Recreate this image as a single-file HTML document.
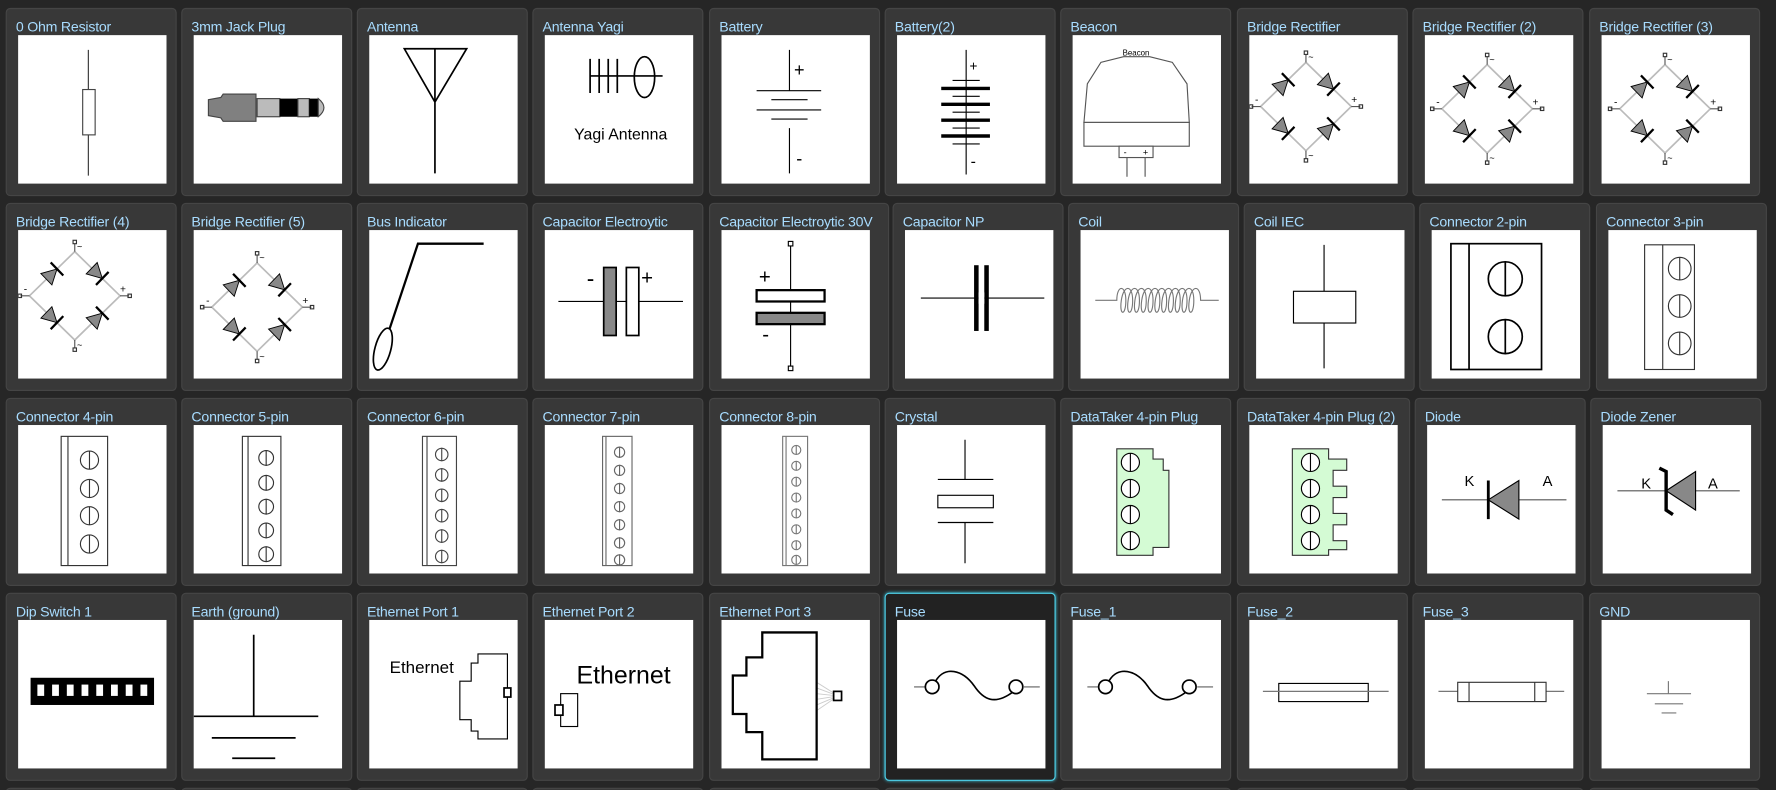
<!DOCTYPE html>
<html><head><meta charset="utf-8"><style>
html,body{margin:0;padding:0;background:#262626;width:1776px;height:790px;overflow:hidden}
#o{position:absolute;left:0;top:0;width:1776px;height:790px;overflow:hidden}
#w{position:absolute;left:0;top:0;width:1568px;height:697px;overflow:hidden;transform:scale(1.13265,1.1334);transform-origin:0 0;font-family:"Liberation Sans",sans-serif}
.c{position:absolute;width:149px;height:164px;background:#383838;border:1px solid #454545;border-radius:4px}
.c span{position:absolute;left:8px;top:9px;font-size:12.5px;color:#a8dcff;white-space:nowrap;letter-spacing:-0.2px}
.c svg{position:absolute;left:10px;top:23px;width:131px;height:131px;background:#fff}
.sel{background:#222;border-color:#4fd2ea;box-shadow:0 0 3px #3bb8d0}
.r5{top:695px;height:10px}
</style></head><body><div id="o"><div id="w">
<svg width="0" height="0" style="position:absolute"><defs>
<g id="dd"><polygon points="-7,-7 -7,7 6,0" fill="#888" stroke="#000" stroke-width="0.8"/><line x1="6" y1="-8" x2="6" y2="8" stroke="#000" stroke-width="2"/></g>
<g id="br"><polygon points="-40,0 0,-39 40,0 0,39" fill="none" stroke="#bbb" stroke-width="1.5"/>
<use href="#dd" transform="translate(-20,-19.5) rotate(-44)"/><use href="#dd" transform="translate(20,-19.5) rotate(44)"/>
<use href="#dd" transform="translate(-20,19.5) rotate(44)"/><use href="#dd" transform="translate(20,19.5) rotate(-44)"/>
<line x1="0" y1="-39" x2="0" y2="-46" stroke="#555"/><line x1="0" y1="39" x2="0" y2="46" stroke="#555"/>
<line x1="-40" y1="0" x2="-48" y2="0" stroke="#555"/><line x1="40" y1="0" x2="48" y2="0" stroke="#555"/>
<rect x="-50" y="-1.5" width="3" height="3" fill="none" stroke="#333"/><rect x="47" y="-1.5" width="3" height="3" fill="none" stroke="#333"/>
<rect x="-1.5" y="-49" width="3" height="3" fill="none" stroke="#333"/><rect x="-1.5" y="46" width="3" height="3" fill="none" stroke="#333"/>
<text x="2" y="-41" font-size="8">~</text><text x="2" y="46" font-size="8">~</text><text x="-45" y="-3" font-size="9">-</text><text x="40" y="-3" font-size="9">+</text></g>
</defs></svg>

<div class="c" style="left:5px;top:7px"><span>0 Ohm Resistor</span><svg viewBox="0 0 131 131"><line x1="62" y1="13" x2="62" y2="124" stroke="#333"/><rect x="57" y="48" width="11" height="40" fill="#fff" stroke="#444"/></svg></div>
<div class="c" style="left:160px;top:7px"><span>3mm Jack Plug</span><svg viewBox="0 0 131 131"><path d="M13 57 L24 55 L26 52 L55 52 L55 76 L26 76 L24 73 L13 71 Z" fill="#808080" stroke="#444"/><rect x="56" y="56" width="20" height="16" fill="#bbb" stroke="#444"/><rect x="76" y="56" width="16" height="16" fill="#000"/><rect x="92" y="56" width="10" height="16" fill="#bbb" stroke="#444"/><rect x="102" y="56" width="8" height="16" fill="#000"/><path d="M110 56 Q120 64 110 72 Z" fill="#bbb" stroke="#444"/></svg></div>
<div class="c" style="left:315px;top:7px"><span>Antenna</span><svg viewBox="0 0 131 131"><path d="M31 12 L86 12 L58 59 Z M58 12 V122" fill="none" stroke="#000" stroke-width="1.5"/></svg></div>
<div class="c" style="left:470px;top:7px"><span>Antenna Yagi</span><svg viewBox="0 0 131 131"><g stroke="#000" stroke-width="1.5"><line x1="40" y1="21" x2="40" y2="51"/><line x1="48" y1="21" x2="48" y2="51"/><line x1="56" y1="21" x2="56" y2="51"/><line x1="64" y1="21" x2="64" y2="51"/><line x1="40" y1="36" x2="104" y2="36"/></g><ellipse cx="88" cy="37" rx="9" ry="18" fill="none" stroke="#000" stroke-width="1.5"/><text x="67" y="92" font-size="14" text-anchor="middle">Yagi Antenna</text></svg></div>
<div class="c" style="left:626px;top:7px"><span>Battery</span><svg viewBox="0 0 131 131"><g stroke="#000"><line x1="60" y1="13" x2="60" y2="49"/><line x1="31" y1="49" x2="88" y2="49"/><line x1="44" y1="57" x2="76" y2="57"/><line x1="31" y1="66" x2="88" y2="66"/><line x1="44" y1="74" x2="76" y2="74"/><line x1="60" y1="82" x2="60" y2="122"/></g><text x="64" y="36" font-size="16">+</text><text x="66" y="114" font-size="16">-</text></svg></div>
<div class="c" style="left:781px;top:7px"><span>Battery(2)</span><svg viewBox="0 0 131 131"><g stroke="#000"><line x1="61" y1="13" x2="61" y2="123"/><g stroke-width="3"><line x1="39" y1="47" x2="82" y2="47"/><line x1="39" y1="61" x2="82" y2="61"/><line x1="39" y1="75" x2="82" y2="75"/><line x1="39" y1="89" x2="82" y2="89"/></g><line x1="49" y1="40" x2="73" y2="40"/><line x1="49" y1="54" x2="73" y2="54"/><line x1="49" y1="68" x2="73" y2="68"/><line x1="49" y1="82" x2="73" y2="82"/><line x1="49" y1="96" x2="73" y2="96"/></g><text x="64" y="31" font-size="12">+</text><text x="65" y="116" font-size="14">-</text></svg></div>
<div class="c" style="left:936px;top:7px"><span>Beacon</span><svg viewBox="0 0 131 131"><path d="M10 77 L13 43 L25 24 L45 19 L68 19 L88 24 L101 43 L103 77 Z" fill="#fff" stroke="#555"/><rect x="10" y="77" width="93" height="21" fill="#fff" stroke="#555"/><rect x="41" y="98" width="30" height="10" fill="#fff" stroke="#555"/><line x1="48" y1="108" x2="48" y2="125" stroke="#555"/><line x1="64" y1="108" x2="64" y2="125" stroke="#555"/><text x="56" y="18" font-size="7" text-anchor="middle">Beacon</text><text x="45" y="106" font-size="8">-</text><text x="62" y="106" font-size="8">+</text></svg></div>
<div class="c" style="left:1092px;top:7px"><span>Bridge Rectifier</span><svg viewBox="0 0 131 131"><use href="#br" x="50" y="63"/></svg></div>
<div class="c" style="left:1247px;top:7px"><span>Bridge Rectifier (2)</span><svg viewBox="0 0 131 131"><use href="#br" x="55" y="65"/></svg></div>
<div class="c" style="left:1403px;top:7px"><span>Bridge Rectifier (3)</span><svg viewBox="0 0 131 131"><use href="#br" x="56" y="65"/></svg></div>

<div class="c" style="left:5px;top:179px"><span>Bridge Rectifier (4)</span><svg viewBox="0 0 131 131"><use href="#br" x="50" y="58"/></svg></div>
<div class="c" style="left:160px;top:179px"><span>Bridge Rectifier (5)</span><svg viewBox="0 0 131 131"><use href="#br" x="56" y="68"/></svg></div>
<div class="c" style="left:315px;top:179px"><span>Bus Indicator</span><svg viewBox="0 0 131 131"><polyline points="18,87 43,12 101,12" fill="none" stroke="#000" stroke-width="2"/><ellipse cx="12" cy="105" rx="7" ry="19" transform="rotate(15 12 105)" fill="none" stroke="#000" stroke-width="1.5"/></svg></div>
<div class="c" style="left:470px;top:179px"><span>Capacitor Electroytic</span><svg viewBox="0 0 131 131"><line x1="12" y1="63" x2="122" y2="63" stroke="#000"/><rect x="52" y="33" width="11" height="60" fill="#888" stroke="#000" stroke-width="1.5"/><rect x="72" y="33" width="11" height="60" fill="#fff" stroke="#000" stroke-width="1.5"/><text x="37" y="50" font-size="20">-</text><text x="85" y="48" font-size="18">+</text></svg></div>
<div class="c" style="left:626px;top:179px;width:157px"><span>Capacitor Electroytic 30V</span><svg viewBox="0 0 131 131"><line x1="61" y1="12" x2="61" y2="122" stroke="#000"/><rect x="59" y="10" width="4" height="4" fill="#fff" stroke="#000"/><rect x="59" y="120" width="4" height="4" fill="#fff" stroke="#000"/><rect x="31" y="53" width="60" height="10" fill="#fff" stroke="#000" stroke-width="2"/><rect x="31" y="73" width="60" height="10" fill="#888" stroke="#000" stroke-width="2"/><text x="33" y="47" font-size="18">+</text><text x="36" y="98" font-size="18">-</text></svg></div>
<div class="c" style="left:788px;top:179px"><span>Capacitor NP</span><svg viewBox="0 0 131 131"><line x1="14" y1="60" x2="123" y2="60" stroke="#000"/><rect x="61" y="31" width="4" height="58" fill="#000"/><rect x="70" y="31" width="4" height="58" fill="#000"/><rect x="65" y="55" width="5" height="10" fill="#fff"/></svg></div>
<div class="c" style="left:943px;top:179px"><span>Coil</span><svg viewBox="0 0 131 131"><path d="M13 62 H32 C32 48 40 48 40 62 C40 76 34 76 36 62 C38 48 46 48 46 62 C46 76 40 76 42 62 C44 48 52 48 52 62 C52 76 46 76 48 62 C50 48 58 48 58 62 C58 76 52 76 54 62 C56 48 64 48 64 62 C64 76 58 76 60 62 C62 48 70 48 70 62 C70 76 64 76 66 62 C68 48 76 48 76 62 C76 76 70 76 72 62 C74 48 82 48 82 62 C82 76 76 76 78 62 C80 48 88 48 88 62 C88 76 82 76 84 62 C86 48 94 48 94 62 C94 76 88 76 90 62 C92 48 100 48 100 62 C100 76 94 76 96 62 C98 48 106 48 106 62 H122" fill="none" stroke="#777"/></svg></div>
<div class="c" style="left:1098px;top:179px"><span>Coil IEC</span><svg viewBox="0 0 131 131"><line x1="60" y1="13" x2="60" y2="122" stroke="#000"/><rect x="33" y="54" width="55" height="28" fill="#fff" stroke="#000"/></svg></div>
<div class="c" style="left:1253px;top:179px"><span>Connector 2-pin</span><svg viewBox="0 0 131 131"><g fill="#fff" stroke="#000" stroke-width="1.5"><rect x="17" y="12" width="80" height="111"/><line x1="33" y1="12" x2="33" y2="123"/><circle cx="65" cy="43" r="15"/><circle cx="65" cy="94" r="15"/><line x1="65" y1="28" x2="65" y2="58"/><line x1="65" y1="79" x2="65" y2="109"/></g></svg></div>
<div class="c" style="left:1409px;top:179px"><span>Connector 3-pin</span><svg viewBox="0 0 131 131"><g fill="#fff" stroke="#333"><rect x="32" y="13" width="44" height="110"/><line x1="48" y1="13" x2="48" y2="123"/><circle cx="63" cy="34" r="10"/><circle cx="63" cy="67" r="10"/><circle cx="63" cy="100" r="10"/><line x1="63" y1="24" x2="63" y2="44"/><line x1="63" y1="57" x2="63" y2="77"/><line x1="63" y1="90" x2="63" y2="110"/></g></svg></div>

<div class="c" style="left:5px;top:351px"><span>Connector 4-pin</span><svg viewBox="0 0 131 131"><g fill="#fff" stroke="#333"><rect x="38" y="10" width="41" height="114"/><line x1="44" y1="10" x2="44" y2="124"/><circle cx="63" cy="31" r="8"/><circle cx="63" cy="56" r="8"/><circle cx="63" cy="80" r="8"/><circle cx="63" cy="105" r="8"/><path d="M63 23V39M63 48V64M63 72V88M63 97V113"/></g></svg></div>
<div class="c" style="left:160px;top:351px"><span>Connector 5-pin</span><svg viewBox="0 0 131 131"><g fill="#fff" stroke="#333"><rect x="43" y="10" width="34" height="114"/><line x1="48" y1="10" x2="48" y2="124"/><circle cx="64" cy="29" r="6.5"/><circle cx="64" cy="51" r="6.5"/><circle cx="64" cy="72" r="6.5"/><circle cx="64" cy="93" r="6.5"/><circle cx="64" cy="114" r="6.5"/><path d="M64 22V36M64 44V58M64 65V79M64 86V100M64 107V121"/></g></svg></div>
<div class="c" style="left:315px;top:351px"><span>Connector 6-pin</span><svg viewBox="0 0 131 131"><g fill="#fff" stroke="#444"><rect x="47" y="10" width="30" height="114"/><line x1="51" y1="10" x2="51" y2="124"/><circle cx="64" cy="26" r="5.5"/><circle cx="64" cy="44" r="5.5"/><circle cx="64" cy="62" r="5.5"/><circle cx="64" cy="80" r="5.5"/><circle cx="64" cy="98" r="5.5"/><circle cx="64" cy="116" r="5.5"/><path d="M64 20V32M64 38V50M64 56V68M64 74V86M64 92V104M64 110V122"/></g></svg></div>
<div class="c" style="left:470px;top:351px"><span>Connector 7-pin</span><svg viewBox="0 0 131 131"><g fill="#fff" stroke="#666"><rect x="51" y="10" width="26" height="114"/><line x1="54" y1="10" x2="54" y2="124"/><circle cx="66" cy="24" r="4.5"/><circle cx="66" cy="40" r="4.5"/><circle cx="66" cy="56" r="4.5"/><circle cx="66" cy="72" r="4.5"/><circle cx="66" cy="88" r="4.5"/><circle cx="66" cy="104" r="4.5"/><circle cx="66" cy="119" r="4.5"/><path d="M66 19V29M66 35V45M66 51V61M66 67V77M66 83V93M66 99V109M66 114V124"/></g></svg></div>
<div class="c" style="left:626px;top:351px"><span>Connector 8-pin</span><svg viewBox="0 0 131 131"><g fill="#fff" stroke="#777"><rect x="54" y="10" width="22" height="114"/><line x1="57" y1="10" x2="57" y2="124"/><circle cx="66" cy="22" r="4"/><circle cx="66" cy="36" r="4"/><circle cx="66" cy="50" r="4"/><circle cx="66" cy="64" r="4"/><circle cx="66" cy="78" r="4"/><circle cx="66" cy="92" r="4"/><circle cx="66" cy="106" r="4"/><circle cx="66" cy="119" r="4"/><path d="M66 18V26M66 32V40M66 46V54M66 60V68M66 74V82M66 88V96M66 102V110M66 115V123"/></g></svg></div>
<div class="c" style="left:781px;top:351px"><span>Crystal</span><svg viewBox="0 0 131 131"><g stroke="#000" fill="#fff"><line x1="60" y1="13" x2="60" y2="48"/><line x1="36" y1="48" x2="85" y2="48"/><rect x="36" y="62" width="49" height="11"/><line x1="36" y1="86" x2="85" y2="86"/><line x1="60" y1="86" x2="60" y2="122"/></g></svg></div>
<div class="c" style="left:936px;top:351px"><span>DataTaker 4-pin Plug</span><svg viewBox="0 0 131 131"><path d="M39 21 H71 V30 H80 V40 H85 V108 H71 V115 H39 Z" fill="#d4fbd4" stroke="#333"/><g fill="#fff" stroke="#000"><circle cx="51" cy="33" r="8"/><circle cx="51" cy="56" r="8"/><circle cx="51" cy="79" r="8"/><circle cx="51" cy="102" r="8"/><path d="M51 25V41M51 48V64M51 71V87M51 94V110"/></g></svg></div>
<div class="c" style="left:1092px;top:351px;width:151px"><span>DataTaker 4-pin Plug (2)</span><svg viewBox="0 0 131 131"><path d="M38 21 H70 V30 H86 V40 H74 V54 H86 V64 H74 V78 H86 V88 H74 V102 H86 V110 H70 V115 H38 Z" fill="#d4fbd4" stroke="#333"/><g fill="#fff" stroke="#000"><circle cx="54" cy="33" r="8"/><circle cx="54" cy="56" r="8"/><circle cx="54" cy="79" r="8"/><circle cx="54" cy="102" r="8"/><path d="M54 25V41M54 48V64M54 71V87M54 94V110"/></g></svg></div>
<div class="c" style="left:1249px;top:351px"><span>Diode</span><svg viewBox="0 0 131 131"><line x1="13" y1="66" x2="123" y2="66" stroke="#555"/><polygon points="54,66 81,49 81,83" fill="#888" stroke="#000"/><line x1="54" y1="49" x2="54" y2="83" stroke="#000" stroke-width="2.5"/><text x="33" y="54" font-size="13">K</text><text x="102" y="54" font-size="13">A</text></svg></div>
<div class="c" style="left:1404px;top:351px"><span>Diode Zener</span><svg viewBox="0 0 131 131"><line x1="13" y1="58" x2="121" y2="58" stroke="#555"/><polygon points="56,58 82,41 82,75" fill="#888" stroke="#000"/><polyline points="50,38 56,41 56,75 62,79" fill="none" stroke="#000" stroke-width="3"/><text x="34" y="56" font-size="13">K</text><text x="93" y="56" font-size="13">A</text></svg></div>

<div class="c" style="left:5px;top:523px"><span>Dip Switch 1</span><svg viewBox="0 0 131 131"><rect x="11" y="51" width="109" height="24" fill="#000"/><g fill="#fff"><rect x="17" y="57" width="6" height="10"/><rect x="30" y="57" width="6" height="10"/><rect x="43" y="57" width="6" height="10"/><rect x="56" y="57" width="6" height="10"/><rect x="69" y="57" width="6" height="10"/><rect x="82" y="57" width="6" height="10"/><rect x="95" y="57" width="6" height="10"/><rect x="108" y="57" width="6" height="10"/></g></svg></div>
<div class="c" style="left:160px;top:523px"><span>Earth (ground)</span><svg viewBox="0 0 131 131"><g stroke="#000" stroke-width="1.5"><line x1="53" y1="13" x2="53" y2="85"/><line x1="0" y1="85" x2="110" y2="85"/><line x1="16" y1="104" x2="90" y2="104"/><line x1="34" y1="122" x2="72" y2="122"/></g></svg></div>
<div class="c" style="left:315px;top:523px"><span>Ethernet Port 1</span><svg viewBox="0 0 131 131"><text x="18" y="47" font-size="15">Ethernet</text><path d="M96 30 H122 V105 H96 V98 H90 V88 H80 V54 H90 V38 H96 Z" fill="#fff" stroke="#000"/><rect x="119" y="60" width="6" height="8" fill="#fff" stroke="#000" stroke-width="1.5"/></svg></div>
<div class="c" style="left:470px;top:523px"><span>Ethernet Port 2</span><svg viewBox="0 0 131 131"><text x="28" y="56" font-size="22">Ethernet</text><rect x="14" y="65" width="15" height="29" fill="#fff" stroke="#000"/><rect x="9" y="75" width="7" height="9" fill="#fff" stroke="#000" stroke-width="1.5"/></svg></div>
<div class="c" style="left:626px;top:523px"><span>Ethernet Port 3</span><svg viewBox="0 0 131 131"><g stroke="#ccc" stroke-width="0.8"><line x1="84" y1="55" x2="103" y2="67"/><line x1="84" y1="60" x2="103" y2="67"/><line x1="84" y1="65" x2="103" y2="67"/><line x1="84" y1="70" x2="103" y2="67"/><line x1="84" y1="75" x2="103" y2="67"/><line x1="84" y1="80" x2="103" y2="67"/></g><path d="M36 11 H84 V123 H36 V99 H22 V83 H10 V49 H22 V33 H36 Z" fill="#fff" stroke="#000" stroke-width="2"/><rect x="99" y="63" width="7" height="8" fill="#fff" stroke="#000" stroke-width="1.5"/></svg></div>
<div class="c sel" style="left:781px;top:523px"><span>Fuse</span><svg viewBox="0 0 131 131"><line x1="15" y1="59" x2="33" y2="59" stroke="#999" stroke-width="1.5"/><line x1="112" y1="59" x2="126" y2="59" stroke="#999" stroke-width="1.5"/><path d="M34 54 C42 40 58 44 68 58 C76 70 86 76 103 63" fill="none" stroke="#000" stroke-width="1.5"/><circle cx="31" cy="59" r="6" fill="#fff" stroke="#000" stroke-width="1.5"/><circle cx="105" cy="59" r="6" fill="#fff" stroke="#000" stroke-width="1.5"/></svg></div>
<div class="c" style="left:936px;top:523px"><span>Fuse_1</span><svg viewBox="0 0 131 131"><line x1="13" y1="59" x2="31" y2="59" stroke="#999" stroke-width="1.5"/><line x1="110" y1="59" x2="124" y2="59" stroke="#999" stroke-width="1.5"/><path d="M32 54 C40 40 56 44 66 58 C74 70 84 76 101 63" fill="none" stroke="#000" stroke-width="1.5"/><circle cx="29" cy="59" r="6" fill="#fff" stroke="#000" stroke-width="1.5"/><circle cx="103" cy="59" r="6" fill="#fff" stroke="#000" stroke-width="1.5"/></svg></div>
<div class="c" style="left:1092px;top:523px"><span>Fuse_2</span><svg viewBox="0 0 131 131"><rect x="26" y="56" width="79" height="16" fill="#fff" stroke="#000" stroke-width="1"/><line x1="12" y1="63" x2="123" y2="63" stroke="#777" stroke-width="1.2"/></svg></div>
<div class="c" style="left:1247px;top:523px"><span>Fuse_3</span><svg viewBox="0 0 131 131"><line x1="12" y1="63" x2="123" y2="63" stroke="#777"/><rect x="29" y="55" width="78" height="17" fill="#fff" stroke="#333"/><line x1="39" y1="55" x2="39" y2="72" stroke="#333"/><line x1="97" y1="55" x2="97" y2="72" stroke="#333"/></svg></div>
<div class="c" style="left:1403px;top:523px"><span>GND</span><svg viewBox="0 0 131 131"><g stroke="#777"><line x1="59" y1="54" x2="59" y2="65"/><line x1="40" y1="65" x2="79" y2="65"/><line x1="47" y1="74" x2="72" y2="74"/><line x1="53" y1="82" x2="66" y2="82"/></g></svg></div>

<div class="c r5" style="left:5px"></div><div class="c r5" style="left:160px"></div><div class="c r5" style="left:315px"></div><div class="c r5" style="left:470px"></div><div class="c r5" style="left:626px"></div><div class="c r5" style="left:781px"></div><div class="c r5" style="left:936px"></div><div class="c r5" style="left:1092px"></div><div class="c r5" style="left:1247px"></div><div class="c r5" style="left:1403px"></div>
</div></div></body></html>
